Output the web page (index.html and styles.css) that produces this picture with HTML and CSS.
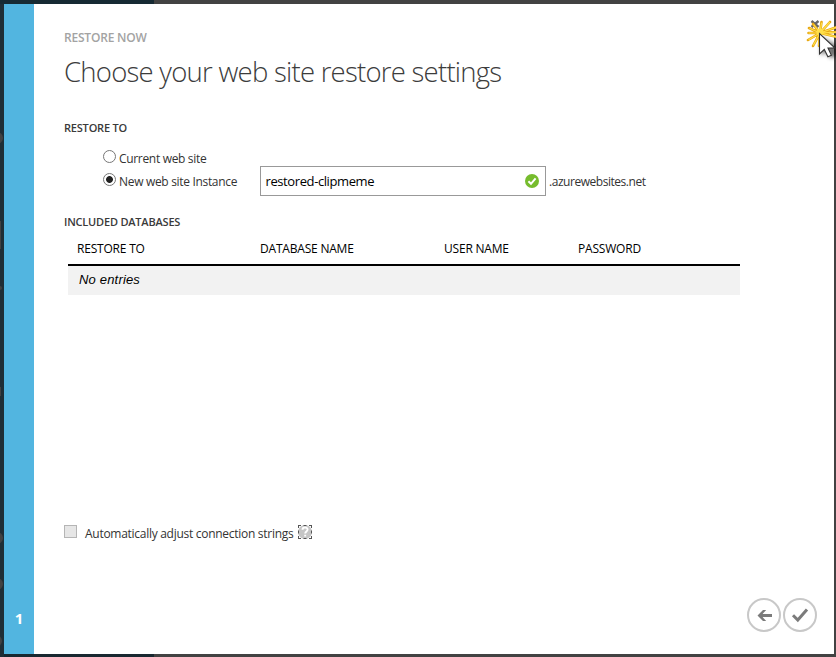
FILE: index.html
```html
<!DOCTYPE html>
<html lang="en">
<head>
<meta charset="utf-8">
<title>Restore now</title>
<link rel="stylesheet" href="styles.css">
</head>
<body>
<svg class="backdrop" viewBox="0 0 836 657" aria-hidden="true">
  <rect width="836" height="657" fill="#424242"/>
  <rect width="154" height="657" fill="#182830"/>
  <rect width="4" height="657" fill="#1f2e36"/>
  <rect width="154" height="4" fill="#162a33"/>
  <g fill="#424242">
    <circle cx="-3" cy="138" r="6"/>
    <rect y="221" width="1" height="28"/>
    <circle cx="0" cy="288" r="2"/>
    <rect y="387" width="1" height="9"/>
    <circle cx="-3" cy="538" r="6"/>
    <circle cx="-3" cy="584" r="6"/>
    <circle cx="-4" cy="641" r="6"/>
  </g>
</svg>
<div class="dialog">
  <aside class="rail"><span class="step">1</span></aside>
  <main class="content">
    <p class="eyebrow">RESTORE NOW</p>
    <h1>Choose your web site restore settings</h1>
    <h2 class="section restore">RESTORE TO</h2>
    <div class="target">
      <div class="choices">
        <label class="choice"><i class="radio"></i><span>Current web site</span></label>
        <label class="choice"><i class="radio on"></i><span>New web site Instance</span></label>
      </div>
      <div class="field">
        <span class="value">restored-clipmeme</span>
        <svg width="14" height="14" viewBox="0 0 14 14"><circle cx="7" cy="7" r="7" fill="#76bc2d"/><path d="M3.4 7.2 6 9.8 10.6 4.3" fill="none" stroke="#fff" stroke-width="2"/></svg>
      </div>
      <span class="suffix">.azurewebsites.net</span>
    </div>
    <h2 class="section included">INCLUDED DATABASES</h2>
    <div class="table">
      <div class="head"><span>RESTORE TO</span><span>DATABASE NAME</span><span>USER NAME</span><span>PASSWORD</span></div>
      <div class="empty">No entries</div>
    </div>
    <div class="adjust">
      <i class="check"></i>
      <span class="adjust-label">Automatically adjust connection strings</span>
      <span class="help"><svg width="14" height="14" viewBox="0 0 14 14"><circle cx="7" cy="7" r="7" fill="#c5c5c5"/><path d="M4.5 4.8C4.5 1.8 9.6 1.8 9.6 4.6 9.6 6.5 7.2 6.4 7.2 8.5M7.2 9.8V11.6" fill="none" stroke="#fff" stroke-width="1.9"/></svg></span>
    </div>
    <div class="actions">
      <svg width="34" height="34" viewBox="0 0 34 34"><circle cx="17" cy="17" r="16" fill="#fff" stroke="#c8c8c8" stroke-width="2"/><path d="M25 17.5H12.5" fill="none" stroke="#7b7b7b" stroke-width="3"/><path d="M16 12h3.2l-5 5.5 5 5.5H16l-5.5-5.5z" fill="#7b7b7b"/></svg>
      <svg width="34" height="34" viewBox="0 0 34 34"><circle cx="17" cy="17" r="16" fill="#fff" stroke="#c8c8c8" stroke-width="2"/><path d="M10 17.3 14.8 22 24 11.5" fill="none" stroke="#7b7b7b" stroke-width="3"/></svg>
    </div>
  </main>
</div>
<svg class="pointer" viewBox="0 0 36 54" aria-hidden="true">
  <defs><filter id="soft" x="-50%" y="-50%" width="200%" height="200%"><feGaussianBlur stdDeviation="2"/></filter></defs>
  <path d="m11.5 13 7 6m0-6-7 6" stroke="#666" stroke-width="2.4"/>
  <path d="M21 29V48l5-5 4 7 8-2V38z" fill="#000" opacity=".55" filter="url(#soft)"/>
  <g fill="none" stroke-linecap="round">
    <path d="M20 25 21.5 14M20 25 30 14M20 25 37 19M20 25 37 24M20 25 37 29M20 25 13 16M20 25 9 20M20 25 8.500 25M20 25 8 32M20 25 13 38M20 25 19 38" stroke="#e8a813" stroke-width="2.6"/>
    <path d="M20 25 21.500 15M20 25 29.500 14.500M20 25 37 19M20 25 37 24M20 25 37 29M20 25 14 17M20 25 10 20.500M20 25 9 25M20 25 9 31.500M20 25 13.500 37M20 25 19 37" stroke="#ffe04a" stroke-width="1.2"/>
    <circle cx="20" cy="24" r="3.500" fill="#ffe04a"/>
  </g>
  <path d="M19.5 25.500V46l4.8-4.5 3.6 7.3 3.5-1.6-3.4-7.2H35z" fill="#fff" stroke="#333" stroke-width="1.1"/>
</svg>
</body>
</html>
```

FILE: styles.css
```css
* { box-sizing: border-box; }
body { margin: 0; width: 836px; height: 657px; overflow: hidden; padding: 4px 2px 3px 4px; font: 12px/16px "Open Sans", "Noto Sans", sans-serif; color: #333; position: relative; }
.backdrop { position: absolute; inset: 0; width: 836px; height: 657px; z-index: -1; }
.dialog { display: flex; width: 830px; height: 650px; background: #fff; }
.rail { width: 30px; background: #52b5e0; display: flex; align-items: flex-end; justify-content: center; padding-bottom: 28px; }
.step { color: #fff; font-weight: 700; font-size: 15px; line-height: 16px; }
.content { flex: 1; display: flex; flex-direction: column; padding: 26px 17px 22px 30px; white-space: nowrap; }
p, h1, h2 { margin: 0; }
.eyebrow { font-size: 12px; font-weight: 600; color: #a3a3a3; letter-spacing: -.2px; }
h1 { margin-top: 6px; font-size: 27.5px; line-height: 40px; font-weight: 300; color: #3c3c3c; letter-spacing: -.75px; }
.section { font-size: 11px; line-height: 16px; font-weight: 600; color: #3a3a3a; letter-spacing: -.2px; }
.restore { margin-top: 28px; }
.target { display: flex; margin-top: 14px; height: 46px; }
.choices { width: 196px; padding-left: 39px; }
.choice { display: flex; gap: 3px; height: 23px; line-height: 18px; letter-spacing: -.32px; }
.radio { width: 13px; height: 13px; border: 1px solid #777; border-radius: 50%; background: #fff; }
.radio.on { background: radial-gradient(circle, #222 0 3px, #fff 3.8px); }
.field { margin-top: 16px; width: 286px; height: 30px; border: 1px solid #999; display: flex; align-items: center; justify-content: space-between; padding: 0 6px 0 4.5px; color: #000; font-size: 13px; letter-spacing: -.4px; }
.suffix { margin: 24px 0 0 3px; letter-spacing: -.46px; }
.included { margin-top: 18px; }
.table { width: 672px; margin: 11px 0 0 4px; color: #000; }
.head { display: grid; grid-template-columns: 183px 184px 134px 1fr; padding-left: 9px; height: 23px; line-height: 16px; letter-spacing: -.2px; }
.empty { border-top: 2px solid #000; background: #f2f2f2; height: 31px; padding-left: 11px; font: italic 13px/27px "Liberation Sans", sans-serif; letter-spacing: .18px; }
.adjust { margin-top: 228px; display: flex; height: 20px; }
.check { width: 13px; height: 13px; margin-top: 2px; border: 1px solid #b5b5b5; background: #e6e6e6; }
.adjust-label { width: 209px; margin: 3px 4px 0 8px; letter-spacing: -.28px; }
.help { width: 14px; height: 14px; margin-top: 2px; outline: 1px dashed #555; outline-offset: -1px; }
.help svg, .actions svg, .field svg { display: block; }
.actions { margin-top: auto; display: flex; justify-content: flex-end; gap: 2px; }
.pointer { position: absolute; left: 800px; top: 8px; width: 36px; height: 54px; overflow: hidden; }
```
